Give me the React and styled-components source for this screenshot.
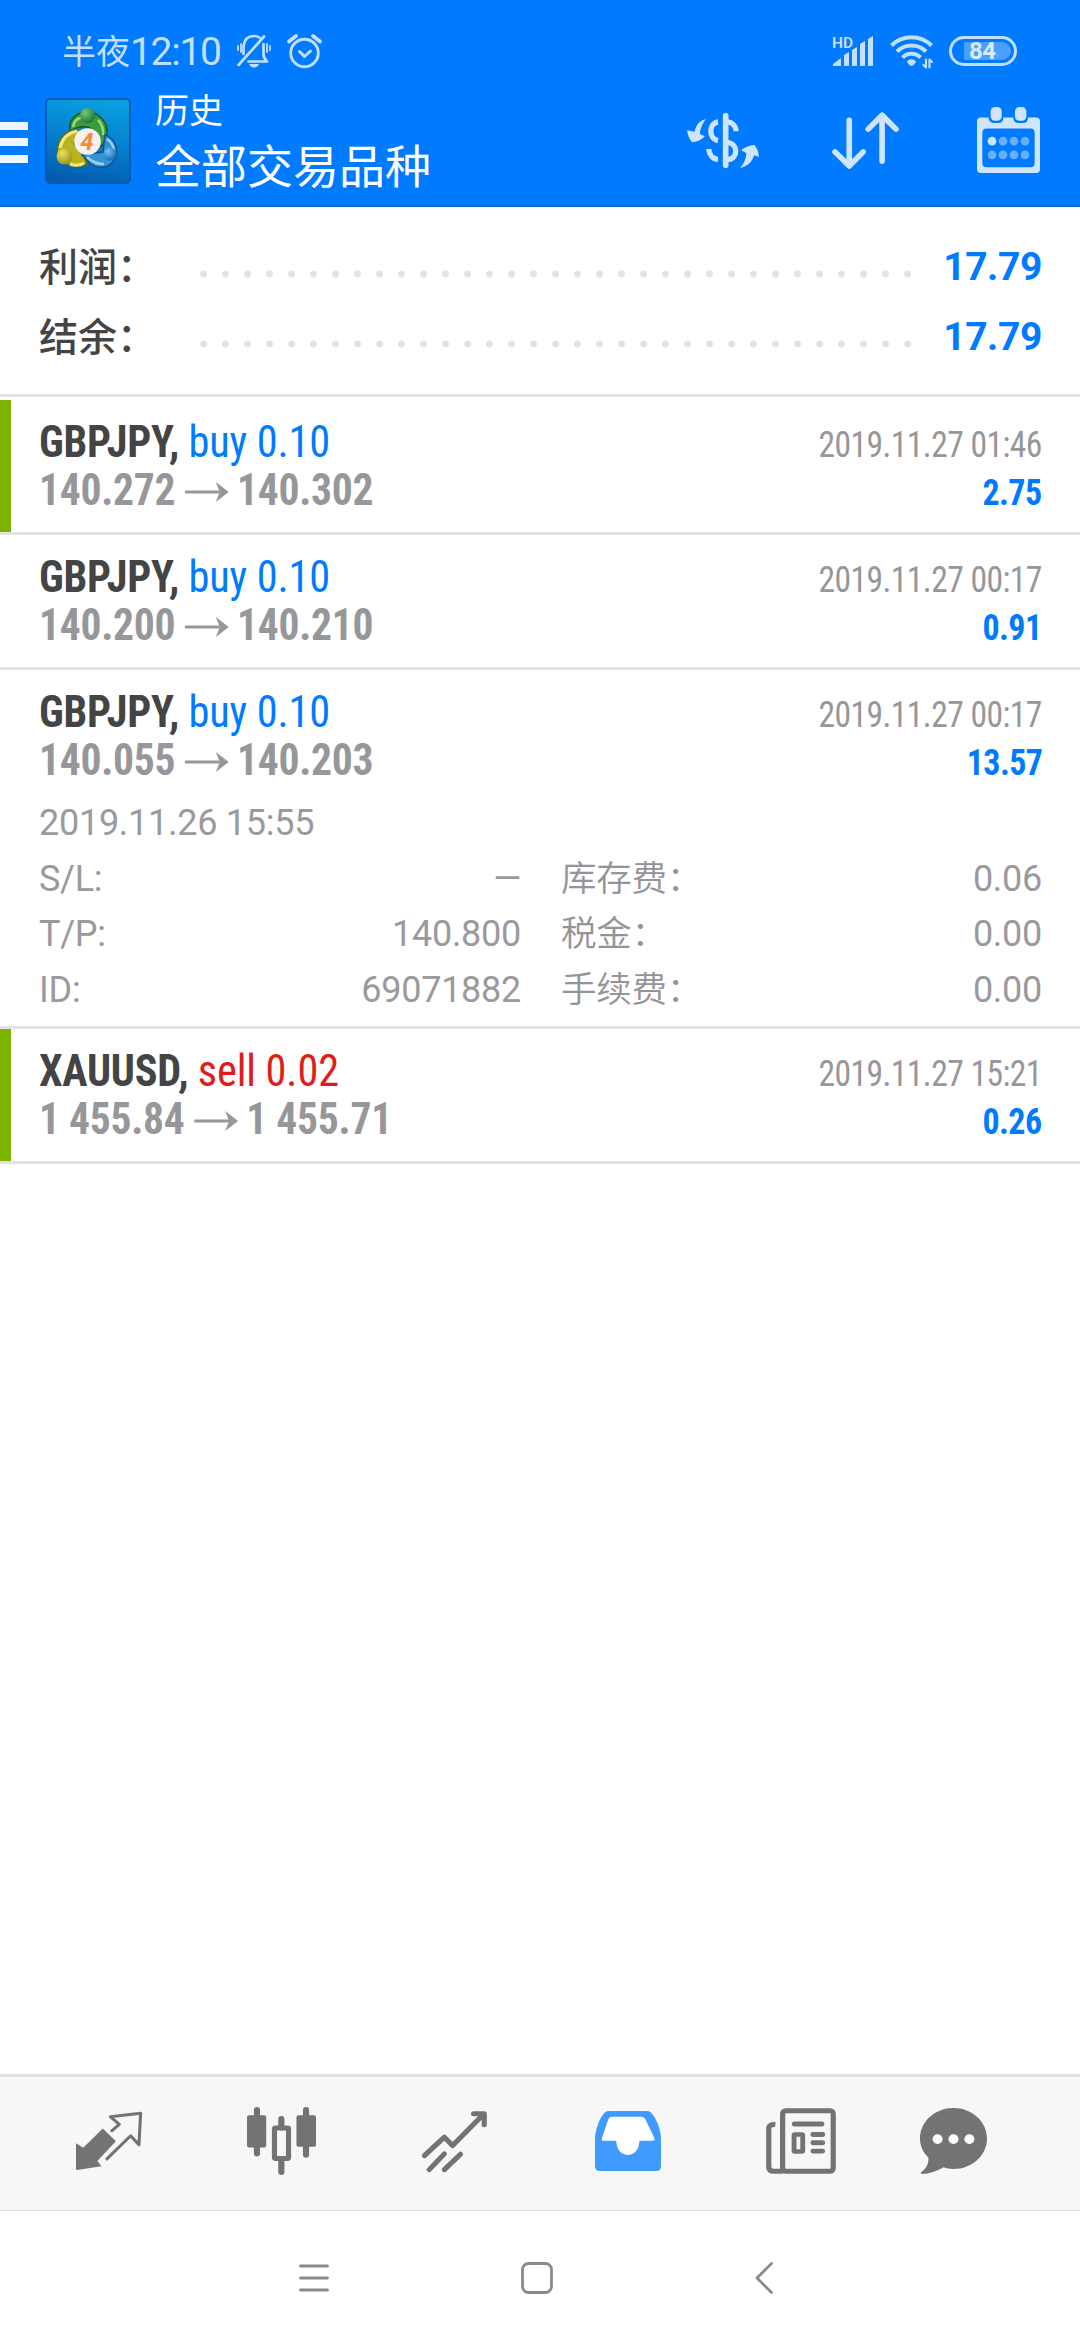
import React from 'react';
import styled, { createGlobalStyle } from 'styled-components';

const Global = createGlobalStyle`
    * { box-sizing: border-box; }
    body {
        margin: 0;
        background: #fff;
        font-family: Roboto, "Noto Sans CJK SC", sans-serif;
    }
    svg { display: block; flex: none; overflow: visible; }
`

const Page = styled.div`
    width: 1080px;
    height: 2340px;
    display: flex;
    flex-direction: column;
    overflow: hidden;
`

const Head = styled.header`
    height: 207px;
    background: #007aff;
    border-bottom: 2px solid #1a68c2;
    color: #fff;
`

const StatusBar = styled.div`
    height: 76px;
    padding: 26px 63px 0 62px;
    display: flex;
    align-items: center;
    color: #c3dffc;
    .bell { margin-left: 16px; }
    .alarm { margin-left: 16px; }
    .signal { margin-left: auto; }
    .wifi { margin-left: 16px; }
`

const Clock = styled.div`
    display: flex;
    align-items: center;
    width: 159px;
    padding-top: 2px;
    font-size: 34px;
    line-height: 48px;
    white-space: nowrap;
    b {
        font-weight: 400;
        font-size: 39px;
        letter-spacing: -1.3px;
    }
`

const Battery = styled.div`
    width: 68px;
    height: 30px;
    margin-left: 16px;
    border: 3px solid #c3dffc;
    border-radius: 15px;
    padding: 3px;
    span {
        display: block;
        height: 18px;
        margin-left: 9px;
        border-radius: 0 9px 9px 0;
        background: #4aa0ff;
        padding-left: 5px;
        font-size: 24px;
        font-weight: 700;
        line-height: 19px;
        letter-spacing: -0.5px;
        color: #d8eafe;
    }
`

const AppBar = styled.div`
    height: 129px;
    padding-right: 40px;
    display: flex;
    align-items: center;
`

const Burger = styled.div`
    width: 28px;
    height: 41px;
    margin: 3px 17px 0 0;
    display: flex;
    flex-direction: column;
    justify-content: space-between;
    i {
        height: 8px;
        background: #eef6ff;
    }
`

const Titles = styled.div`
    flex: 1;
    margin-left: 24px;
    padding-top: 3px;
    white-space: nowrap;
    p {
        margin: 0;
        font-size: 34px;
        line-height: 51px;
    }
    h1 {
        margin: 0;
        font-size: 46px;
        font-weight: 400;
        line-height: 61px;
    }
`

const Actions = styled.div`
    display: flex;
    align-items: center;
    color: #cfe5fe;
    .sort { margin-left: 73px; }
    .calendar { margin: 0 0 2px 78px; }
`

const Summary = styled.section`
    height: 190px;
    padding: 24px 38px 0 39px;
    border-bottom: 3px solid #e2e2e2;
    margin-bottom: 3px;
`

const SummaryRow = styled.div`
    height: 70px;
    display: flex;
    align-items: center;
    font-size: 39px;
    font-weight: 500;
    color: #444;
    span {
        width: 161px;
        padding-bottom: 5px;
    }
    b {
        margin-left: auto;
        padding-top: 2px;
        font-size: 39px;
        font-weight: 700;
        color: #007aff;
        letter-spacing: -0.4px;
    }
`

const Dots = styled.div`
    width: 726px;
    height: 8px;
    margin-top: 15px;
    background: radial-gradient(circle at 3.5px 4px, #e2e2e2 3px, transparent 4px) 0 0 / 22px 8px;
`

const Deal = styled.article`
    height: ${p => p.$open ? 359 : 135}px;
    padding: 18px 38px 0 39px;
    border-bottom: 3px solid #e2e2e2;
    background: ${p => p.$marked ? 'linear-gradient(#7db300, #7db300) 0 0 / 11px 100% no-repeat' : '#fff'};
`

const Line = styled.div`
    height: 48px;
    display: flex;
    align-items: baseline;
    justify-content: space-between;
    font-family: "Roboto Condensed", Roboto, sans-serif;
    font-stretch: 75%;
    line-height: 48px;
    white-space: nowrap;
`

const Symbol = styled.div`
    font-size: 44.5px;
    font-weight: 700;
    letter-spacing: -0.3px;
    color: #444;
    transform: scaleX(0.95);
    transform-origin: left;
    span {
        font-weight: 400;
        letter-spacing: -0.1px;
        color: ${p => p.$side === 'sell' ? '#e01b1b' : '#007aff'};
    }
`

const Prices = styled.div`
    display: flex;
    align-items: center;
    font-size: 44.5px;
    font-weight: 700;
    letter-spacing: -0.3px;
    color: #97979a;
    transform: scaleX(0.935);
    transform-origin: left;
    svg { margin: 3px 8px 0 9px; }
`

const Time = styled.div`
    font-size: 36.5px;
    letter-spacing: -0.6px;
    color: #97979a;
    transform: scaleX(0.92);
    transform-origin: right;
`

const Profit = styled.div`
    font-size: 36.5px;
    font-weight: 700;
    letter-spacing: -0.6px;
    color: #007aff;
    transform: scaleX(0.93);
    transform-origin: right;
`

const Details = styled.div`
    margin-top: 12px;
    font-size: 36px;
    letter-spacing: -0.27px;
    color: #9a9a9d;
    line-height: 55.5px;
`

const DetailGrid = styled.div`
    display: grid;
    grid-template-columns: 482px 481px;
    column-gap: 40px;
    div {
        height: 55.5px;
        display: flex;
        justify-content: space-between;
    }
`

const FeeLabel = styled.span`
    font-size: 35.5px;
    font-weight: 350;
    color: #949497;
`

const TabBar = styled.nav`
    height: 137px;
    margin-top: auto;
    padding: 0 0 5px 22px;
    background: #f7f7f7;
    border-top: 3px solid #e0e0e0;
    border-bottom: 1px solid #dcdcdc;
    display: grid;
    grid-template-columns: repeat(5, 173px) 132px;
    justify-items: center;
    align-items: center;
    color: #737373;
`

const SystemNav = styled.div`
    height: 129px;
    padding: 4px 0 0 202px;
    display: grid;
    grid-template-columns: 223px 223px 231px;
    justify-items: center;
    align-items: center;
    color: #8a8a8a;
`

function Icon({ box, w, h, children, className }) {
    return (
        <svg className={className} width={w} height={h} viewBox={box} preserveAspectRatio="none"
            fill="none" stroke="currentColor" strokeLinecap="round" strokeLinejoin="round">
            {children}
        </svg>
    );
}

const fill = { fill: 'currentColor', stroke: 'none' };

function Bell() {
    return (
        <Icon className="bell" box="0 0 34 34" w={34} h={34}>
            <g strokeWidth="2.700">
                <path d="M1.500 31L27 2.500" />
                <path d="M6.500 20V12C7.500 5 12 2 17 2C19 2 21 2.500 22.500 3.500" />
                <path d="M26.500 10V20C26.500 24 28 25.500 30 27.500H11.500" />
                <path d="M1 12V16M4 10V18M30 10V18M33 12V16" strokeWidth="1.800" />
            </g>
            <path {...fill} d="M12 30H22C21 32.500 19 33.500 17 33.500C15 33.500 13 32.500 12 30Z" />
        </Icon>
    );
}

function Alarm() {
    return (
        <Icon className="alarm" box="0 0 35 35" w={35} h={35}>
            <circle cx="17.500" cy="19" r="13.800" strokeWidth="2.900" />
            <path d="M12.500 17.500L17.500 22.500L23.500 17" strokeWidth="3" />
            <path d="M2 7.500L9 2M33 7.500L26 2" strokeWidth="3.800" />
        </Icon>
    );
}

function Signal() {
    return (
        <Icon className="signal" box="0 0 42 32" w={42} h={32}>
            <text x="0" y="12.500" fontSize="15.500" fontWeight="600" fontFamily="Roboto, sans-serif" {...fill}>HD</text>
            <path {...fill} d="M1 31V29L9 23V31ZM12 31V20L17 17V31ZM20 31V15L25 12V31ZM28 31V9L33 6V31ZM36 31V4L41 1V31Z" />
        </Icon>
    );
}

function Wifi() {
    return (
        <Icon className="wifi" box="0 0 43 34" w={43} h={34}>
            <g strokeWidth="4.200" strokeLinecap="butt">
                <path d="M1.500 11.500C12.500 0.500 30.500 0.500 41.500 11.500" />
                <path d="M7 17.500C15 9.500 28 9.500 36 17.500" />
                <path d="M12.500 23.500C17.500 18.500 25.500 18.500 30.500 23.500" />
            </g>
            <path {...fill} d="M17 27.500C19.500 24.500 23.500 24.500 26 27.500C25.500 29.500 23 32 21.500 32C20 32 17.500 29.500 17 27.500Z" />
            <path d="M36 25.500V33.500L33.500 31M39.500 33.500V25.500L42 28" strokeWidth="2.200" />
        </Icon>
    );
}

// three joined figures around a white disc
function Logo() {
    return (
        <svg width="86" height="86" viewBox="0 0 86 86">
            <defs>
                <linearGradient id="sky" x1="0.600" y1="0" x2="0.400" y2="1">
                    <stop offset="0" stopColor="#0a9fe0" />
                    <stop offset="0.500" stopColor="#057fcf" />
                    <stop offset="1" stopColor="#035cae" />
                </linearGradient>
                <radialGradient id="green" cx="0.35" cy="0.3" r="0.8">
                    <stop offset="0" stopColor="#7cc777" />
                    <stop offset="1" stopColor="#0f6f35" />
                </radialGradient>
                <radialGradient id="yellow" cx="0.35" cy="0.3" r="0.8">
                    <stop offset="0" stopColor="#e9e268" />
                    <stop offset="1" stopColor="#948c10" />
                </radialGradient>
                <radialGradient id="blue" cx="0.35" cy="0.3" r="0.8">
                    <stop offset="0" stopColor="#74c3f5" />
                    <stop offset="1" stopColor="#0d64ab" />
                </radialGradient>
            </defs>
            <rect x="1" y="1" width="84" height="84" rx="4" fill="url(#sky)" stroke="#0a5bb5" strokeWidth="2" />
            <path d="M25 34C23 22 31 14 42 14C55 14 63 25 62 36C61 43 58 47 54 50L45 30Q34 26 25 34Z" fill="#3b9a3c" stroke="#125a22" strokeWidth="1.500" />
            <path d="M28 29C29 22 34 19 39 20M53 22Q59 28 58 37" fill="none" stroke="#9ad67e" strokeWidth="2.500" />
            <path d="M37 32C21 30 13 41 12 54C15 65 28 72 42 66L38 56L29 46Z" fill="#b9b31c" stroke="#6f6a0a" strokeWidth="1.500" />
            <path d="M32 33C22 35 17 41 15 50M25 66Q33 69 39 65" fill="none" stroke="#efe98a" strokeWidth="3" />
            <path d="M60 37C69 40 73 49 71 58C67 70 54 72 46 66L37 57L58 54Z" fill="#3592d2" stroke="#0f5590" strokeWidth="1.500" />
            <path d="M62 41Q68 45 69 52M42 59Q49 66 59 66" fill="none" stroke="#95d2fa" strokeWidth="2.500" />
            <circle cx="42.500" cy="17.500" r="7.500" fill="url(#green)" />
            <circle cx="19.500" cy="58.500" r="8" fill="url(#yellow)" />
            <circle cx="65" cy="56" r="6.500" fill="url(#blue)" />
            <circle cx="42.500" cy="43.500" r="13.300" fill="#f5f1ee" />
            <text x="42" y="52" textAnchor="middle" fontFamily="Roboto, sans-serif" fontWeight="700" fontStyle="italic" fontSize="24" fill="#f58a35">4</text>
        </svg>
    );
}

function Dollar() {
    return (
        <Icon box="138 335 216 165" w={72} h={55}>
            <path d="M254 343V492" strokeWidth="17" />
            <g strokeWidth="16" strokeLinecap="butt">
                <path d="M231 362C202 366 202 412 231 418" />
                <path d="M203 443C205 460 216 473 231 474" />
                <path d="M258 361C274 363 285 374 285 390" />
                <path d="M258 424C292 424 294 475 258 475" />
            </g>
            <path {...fill} d="M195 353C175 358 165 372 161 391L138 387C140 402 146 415 153 423C168 422 182 415 192 405L177 399C177 381 185 365 195 353Z" />
            <path {...fill} d="M297 500C320 496 334 482 339 462L354 467C353 452 347 438 340 431C325 432 310 438 300 447L316 455C315 474 308 489 297 500Z" />
        </Icon>
    );
}

function Sort() {
    return (
        <Icon className="sort" box="574 335 202 173" w={67} h={57}>
            <path d="M626 360V498M583 456L626 499L668 456M725 484V345M683 387L725 345L767 387" strokeWidth="17" />
        </Icon>
    );
}

function Calendar() {
    return (
        <Icon className="calendar" box="1011 320 189 197" w={63} h={66}>
            <path {...fill} fillRule="evenodd" d="M1022 351H1046V356Q1050 368 1062 368H1074Q1090 368 1090 351H1120Q1120 368 1136 368H1148Q1164 368 1164 351H1188Q1200 351 1200 363V505Q1200 517 1188 517H1023Q1011 517 1011 505V363Q1011 351 1022 351ZM1040 384Q1027 384 1027 397V487Q1027 500 1040 500H1171Q1184 500 1184 487V397Q1184 384 1171 384Z" />
            <rect {...fill} x="1052" y="320" width="33" height="41" rx="13" />
            <rect {...fill} x="1125" y="320" width="34" height="41" rx="13" />
            {[422, 463].map(y => [1056, 1089, 1122, 1155].map(x => (
                <circle key={x + '-' + y} cx={x} cy={y} r="13" {...fill} opacity={x === 1056 && y === 422 ? 1 : 0.5} />
            )))}
        </Icon>
    );
}

function Arrow() {
    return (
        <Icon box="0 0 46 22" w={49} h={22}>
            <path d="M1 11H36" strokeWidth="3" strokeLinecap="butt" />
            <path {...fill} d="M32 1L45 11L32 21L36 11Z" />
        </Icon>
    );
}

function QuotesTab() {
    return (
        <Icon box="219 160 192 173" w={66} h={58}>
            <path {...fill} d="M297 209L335 247L281 306L293 322L222 333Q219 333 219 329V253L240 267Z" />
            <path d="M309 300L378 231L402 258L407 164L319 174L345 197L323 216" strokeWidth="9" />
        </Icon>
    );
}

function ChartTab() {
    return (
        <Icon box="716 143 201 205" w={69} h={68}>
            <path d="M745 152V283M888 152V287M816 179V205M816 300V339" strokeWidth="18" />
            <rect {...fill} x="716" y="168" width="56" height="97" rx="6" />
            <rect {...fill} x="860" y="168" width="57" height="95" rx="6" />
            <rect x="796" y="206" width="41" height="92" rx="3" strokeWidth="15" />
        </Icon>
    );
}

function TradeTab() {
    return (
        <Icon box="1224 152 189 182" w={65} h={61}>
            <path d="M1231 285L1289 230L1313 255L1403 162M1374 160H1405V193M1245 327L1289 280M1289 327L1336 281" strokeWidth="15" />
        </Icon>
    );
}

function HistoryTab() {
    return (
        <Icon box="158 152 192 181" w={66} h={60}>
            <path fill="#3f9bff" stroke="none" d="M198 152H310Q318 152 322 158C340 180 350 210 350 238V318Q350 333 336 333H172Q158 333 158 318V238C158 210 170 176 185 158Q190 152 198 152Z" />
            <path fill="#fff" stroke="none" d="M208 169H292Q300 169 304 176L331 234Q332 242 325 242H287C287 299 220 299 220 242H183Q176 242 178 234L197 176Q200 169 208 169Z" />
        </Icon>
    );
}

function NewsTab() {
    return (
        <Icon box="657 143 202 199" w={70} h={66}>
            <rect x="705" y="151" width="146" height="183" rx="9" strokeWidth="15" />
            <path d="M684 193Q665 191 665 206V320Q665 334 679 334H706" strokeWidth="15" strokeLinecap="butt" />
            <path d="M739 191H818M793 223H820M793 248H820M793 273H820" strokeWidth="15" />
            <rect x="738" y="223" width="25" height="51" rx="2" strokeWidth="14" />
        </Icon>
    );
}

function ChatTab() {
    return (
        <Icon box="1102 143 194 199" w={67} h={66}>
            <path {...fill} d="M1199 143C1253 143 1296 184 1296 235C1296 286 1253 327 1199 327C1189 327 1179 325 1170 322C1150 334 1130 342 1107 342Q1102 340 1106 336C1121 325 1128 309 1126 292C1111 277 1102 257 1102 235C1102 184 1145 143 1199 143Z" />
            {[1153, 1199, 1245].map(x => <circle key={x} cx={x} cy="237" r="14.500" fill="#fff" stroke="none" />)}
        </Icon>
    );
}

const DEALS = [
    { symbol: 'GBPJPY', side: 'buy', volume: '0.10', open: '140.272', close: '140.302', time: '2019.11.27 01:46', profit: '2.75', marked: true },
    { symbol: 'GBPJPY', side: 'buy', volume: '0.10', open: '140.200', close: '140.210', time: '2019.11.27 00:17', profit: '0.91' },
    {
        symbol: 'GBPJPY', side: 'buy', volume: '0.10', open: '140.055', close: '140.203', time: '2019.11.27 00:17', profit: '13.57',
        details: {
            opened: '2019.11.26 15:55',
            rows: [
                ['S/L:', '—', '库存费：', '0.06'],
                ['T/P:', '140.800', '税金：', '0.00'],
                ['ID:', '69071882', '手续费：', '0.00'],
            ]
        }
    },
    { symbol: 'XAUUSD', side: 'sell', volume: '0.02', open: '1 455.84', close: '1 455.71', time: '2019.11.27 15:21', profit: '0.26', marked: true },
];

function DealItem({ deal }) {
    return (
        <Deal $open={!!deal.details} $marked={deal.marked}>
            <Line>
                <Symbol $side={deal.side}>{deal.symbol}, <span>{deal.side} {deal.volume}</span></Symbol>
                <Time>{deal.time}</Time>
            </Line>
            <Line>
                <Prices>{deal.open}<Arrow />{deal.close}</Prices>
                <Profit>{deal.profit}</Profit>
            </Line>
            {deal.details ? (
                <Details>
                    {deal.details.opened}
                    <DetailGrid>
                        {deal.details.rows.map(([l1, v1, l2, v2]) => (
                            <React.Fragment key={l1}>
                                <div><span>{l1}</span><span>{v1}</span></div>
                                <div><FeeLabel>{l2}</FeeLabel><span>{v2}</span></div>
                            </React.Fragment>
                        ))}
                    </DetailGrid>
                </Details>
            ) : null}
        </Deal>
    );
}

export default function App() {
    return (
        <Page>
            <Global />
            <Head>
                <StatusBar>
                    <Clock>半夜<b>12:10</b></Clock>
                    <Bell />
                    <Alarm />
                    <Signal />
                    <Wifi />
                    <Battery><span>84</span></Battery>
                </StatusBar>
                <AppBar>
                    <Burger><i /><i /><i /></Burger>
                    <Logo />
                    <Titles>
                        <p>历史</p>
                        <h1>全部交易品种</h1>
                    </Titles>
                    <Actions>
                        <Dollar />
                        <Sort />
                        <Calendar />
                    </Actions>
                </AppBar>
            </Head>
            <Summary>
                <SummaryRow><span>利润：</span><Dots /><b>17.79</b></SummaryRow>
                <SummaryRow><span>结余：</span><Dots /><b>17.79</b></SummaryRow>
            </Summary>
            {DEALS.map((deal, i) => <DealItem key={i} deal={deal} />)}
            <TabBar>
                <QuotesTab />
                <ChartTab />
                <TradeTab />
                <HistoryTab />
                <NewsTab />
                <ChatTab />
            </TabBar>
            <SystemNav>
                <Icon box="0 0 30 28" w={30} h={28}>
                    <path d="M1.500 2H28.500M1.500 14H28.500M1.500 26H28.500" strokeWidth="2.800" />
                </Icon>
                <Icon box="0 0 32 32" w={32} h={32}>
                    <rect x="1.500" y="1.500" width="29" height="29" rx="6" strokeWidth="2.800" />
                </Icon>
                <Icon box="0 0 18 32" w={18} h={32}>
                    <path d="M16.500 1.500L2 16L16.500 30.500" strokeWidth="2.800" />
                </Icon>
            </SystemNav>
        </Page>
    );
}
